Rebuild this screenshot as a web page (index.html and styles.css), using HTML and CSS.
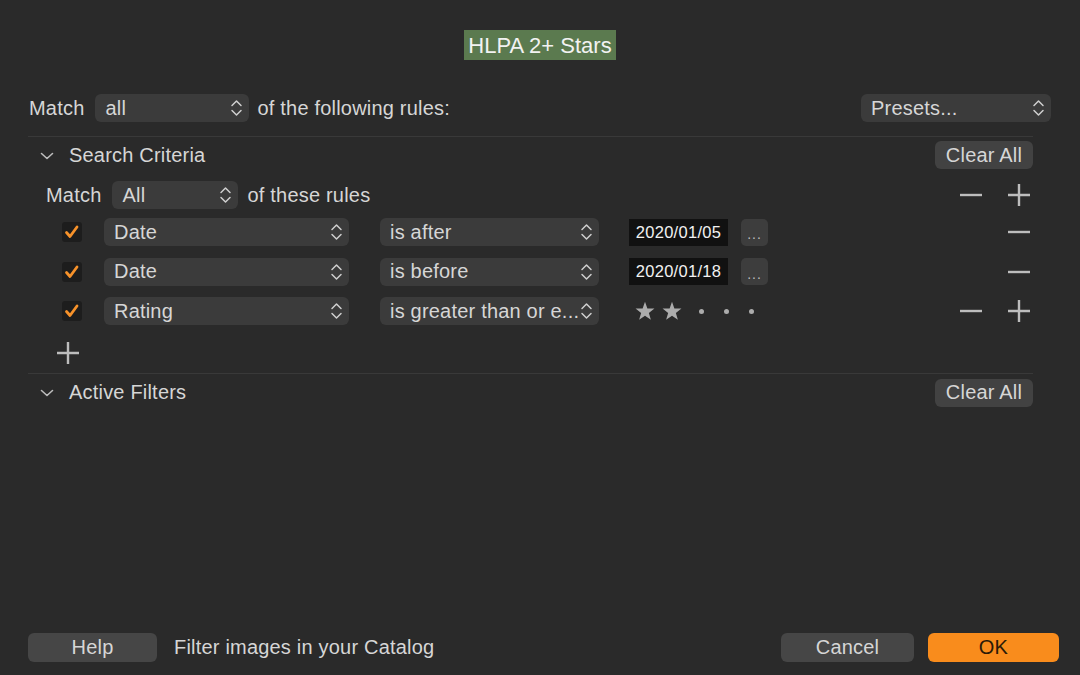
FILE: index.html
```html
<!DOCTYPE html>
<html>
<head>
<meta charset="utf-8">
<link rel="stylesheet" href="styles.css">
</head>
<body>
<div class="dialog">
  <div class="title-row"><span class="title">HLPA 2+ Stars</span></div>

  <div class="top-row">
    <span class="label">Match</span>
    <div class="popup w-match1"><span>all</span><svg class="updown" viewBox="0 0 13 22"><path d="M2 8.5 L6.5 4 L11 8.5 M2 13.5 L6.5 18 L11 13.5"/></svg></div>
    <span class="label">of the following rules:</span>
    <div class="popup w-presets"><span>Presets...</span><svg class="updown" viewBox="0 0 13 22"><path d="M2 8.5 L6.5 4 L11 8.5 M2 13.5 L6.5 18 L11 13.5"/></svg></div>
  </div>

  <div class="section">
    <div class="sep"></div>
    <div class="sec-head">
      <svg class="chev" viewBox="0 0 14 8"><path d="M1.5 1.5 L7 6.5 L12.5 1.5"/></svg>
      <span class="sec-title">Search Criteria</span>
      <button class="btn clear">Clear All</button>
    </div>

    <div class="match-row">
      <span class="label">Match</span>
      <div class="popup w-match2"><span>All</span><svg class="updown" viewBox="0 0 13 22"><path d="M2 8.5 L6.5 4 L11 8.5 M2 13.5 L6.5 18 L11 13.5"/></svg></div>
      <span class="label">of these rules</span>
      <div class="pm">
        <svg class="ic" viewBox="0 0 22 22"><path d="M0 11 H22"/></svg>
        <svg class="ic" viewBox="0 0 22 22"><path d="M0 11 H22 M11 0 V22"/></svg>
      </div>
    </div>

    <div class="rules">
      <div class="rule">
        <svg class="cb" viewBox="0 0 22 22"><rect x="1" y="1" width="20" height="20" rx="3"/><path d="M5.5 11.5 L9 15.5 L16 6"/></svg>
        <div class="popup w-field"><span>Date</span><svg class="updown" viewBox="0 0 13 22"><path d="M2 8.5 L6.5 4 L11 8.5 M2 13.5 L6.5 18 L11 13.5"/></svg></div>
        <div class="popup w-op"><span>is after</span><svg class="updown" viewBox="0 0 13 22"><path d="M2 8.5 L6.5 4 L11 8.5 M2 13.5 L6.5 18 L11 13.5"/></svg></div>
        <div class="datefield">2020/01/05</div>
        <div class="more">...</div>
        <div class="pm">
          <svg class="ic" viewBox="0 0 22 22"><path d="M0 11 H22"/></svg>
        </div>
      </div>
      <div class="rule">
        <svg class="cb" viewBox="0 0 22 22"><rect x="1" y="1" width="20" height="20" rx="3"/><path d="M5.5 11.5 L9 15.5 L16 6"/></svg>
        <div class="popup w-field"><span>Date</span><svg class="updown" viewBox="0 0 13 22"><path d="M2 8.5 L6.5 4 L11 8.5 M2 13.5 L6.5 18 L11 13.5"/></svg></div>
        <div class="popup w-op"><span>is before</span><svg class="updown" viewBox="0 0 13 22"><path d="M2 8.5 L6.5 4 L11 8.5 M2 13.5 L6.5 18 L11 13.5"/></svg></div>
        <div class="datefield">2020/01/18</div>
        <div class="more">...</div>
        <div class="pm">
          <svg class="ic" viewBox="0 0 22 22"><path d="M0 11 H22"/></svg>
        </div>
      </div>
      <div class="rule">
        <svg class="cb" viewBox="0 0 22 22"><rect x="1" y="1" width="20" height="20" rx="3"/><path d="M5.5 11.5 L9 15.5 L16 6"/></svg>
        <div class="popup w-field"><span>Rating</span><svg class="updown" viewBox="0 0 13 22"><path d="M2 8.5 L6.5 4 L11 8.5 M2 13.5 L6.5 18 L11 13.5"/></svg></div>
        <div class="popup w-op"><span>is greater than or e...</span><svg class="updown" viewBox="0 0 13 22"><path d="M2 8.5 L6.5 4 L11 8.5 M2 13.5 L6.5 18 L11 13.5"/></svg></div>
        <div class="stars">
          <svg class="star" viewBox="0 0 24 24"><path d="M12 2 L14.6 9.2 L22.3 9.4 L16.2 14.1 L18.4 21.5 L12 17.2 L5.6 21.5 L7.8 14.1 L1.7 9.4 L9.4 9.2 Z"/></svg>
          <svg class="star" viewBox="0 0 24 24"><path d="M12 2 L14.6 9.2 L22.3 9.4 L16.2 14.1 L18.4 21.5 L12 17.2 L5.6 21.5 L7.8 14.1 L1.7 9.4 L9.4 9.2 Z"/></svg>
          <span class="dot"></span><span class="dot"></span><span class="dot"></span>
        </div>
        <div class="pm">
          <svg class="ic" viewBox="0 0 22 22"><path d="M0 11 H22"/></svg>
          <svg class="ic" viewBox="0 0 22 22"><path d="M0 11 H22 M11 0 V22"/></svg>
        </div>
      </div>
      <div class="add-row">
        <svg class="ic" viewBox="0 0 22 22"><path d="M0 11 H22 M11 0 V22"/></svg>
      </div>
    </div>

    <div class="sep"></div>
    <div class="sec-head second">
      <svg class="chev" viewBox="0 0 14 8"><path d="M1.5 1.5 L7 6.5 L12.5 1.5"/></svg>
      <span class="sec-title">Active Filters</span>
      <button class="btn clear">Clear All</button>
    </div>
  </div>

  <div class="spacer"></div>

  <div class="bottom">
    <button class="btn help">Help</button>
    <span class="label hint">Filter images in your Catalog</span>
    <button class="btn cancel">Cancel</button>
    <button class="btn ok">OK</button>
  </div>
</div>
</body>
</html>
```

FILE: styles.css
```css
* { box-sizing: border-box; }
html, body {
  margin: 0;
  padding: 0;
  background: #2a2a2a;
}
body {
  font-family: "Liberation Sans", Arial, sans-serif;
  font-size: 20px;
  letter-spacing: 0.2px;
  color: #d6d6d6;
}
.dialog {
  width: 1080px;
  height: 675px;
  display: flex;
  flex-direction: column;
  background: #2a2a2a;
}
.title-row {
  padding-top: 30px;
  height: 60px;
  display: flex;
  justify-content: center;
}
.title {
  background: #5b7a4f;
  color: #f2f2f2;
  font-size: 22px;
  letter-spacing: 0;
  height: 30px;
  line-height: 31px;
  width: 152px;
  text-align: center;
  white-space: nowrap;
}
.top-row {
  margin-top: 34px;
  height: 28px;
  padding: 0 29px 0 29px;
  display: flex;
  align-items: center;
}
.label { white-space: nowrap; }
.top-row .w-match1 { margin: 0 8px 0 11px; }
.w-match1 { width: 154px; }
.w-presets { width: 190px; margin-left: auto; }
.popup {
  height: 28px;
  background: #3b3b3b;
  border-radius: 6px;
  display: flex;
  align-items: center;
  justify-content: space-between;
  padding: 0 6px 0 10px;
  color: #d6d6d6;
  white-space: nowrap;
  flex-shrink: 0;
}
.updown {
  width: 13px;
  height: 22px;
  flex-shrink: 0;
  fill: none;
  stroke: #cfcfcf;
  stroke-width: 1.5;
  stroke-linecap: round;
  stroke-linejoin: round;
}
.section {
  margin: 0 47px 0 28px;
  display: flex;
  flex-direction: column;
}
.sep {
  height: 1px;
  background: #393939;
}
.section > .sep:first-child { margin-top: 14px; }
.sec-head {
  margin-top: 4px;
  height: 28px;
  display: flex;
  align-items: center;
}
.sec-head.second { margin-top: 5px; }
.chev {
  width: 14px;
  height: 8px;
  margin-left: 12px;
  margin-top: 1px;
  fill: none;
  stroke: #bcbcbc;
  stroke-width: 1.6;
  stroke-linecap: round;
  stroke-linejoin: round;
}
.sec-title { margin-left: 15px; }
.btn {
  font-family: inherit;
  font-size: 20px;
  letter-spacing: 0.2px;
  color: #d6d6d6;
  border: none;
  border-radius: 6px;
  background: #424242;
  padding: 0;
}
.clear {
  margin-left: auto;
  width: 98px;
  height: 28px;
}
.match-row {
  margin-top: 12px;
  height: 28px;
  display: flex;
  align-items: center;
  padding-left: 18px;
}
.w-match2 { width: 126px; margin: 0 9px 0 11px; }
.pm {
  margin-left: auto;
  margin-right: 3px;
  display: flex;
  gap: 26px;
}
.ic {
  width: 22px;
  height: 22px;
  fill: none;
  stroke: #bdbdbd;
  stroke-width: 2.4;
  display: block;
}
.rules {
  margin-top: 9px;
  display: flex;
  flex-direction: column;
}
.rule {
  height: 28px;
  margin-bottom: 11.5px;
  display: flex;
  align-items: center;
  padding-left: 33px;
}
.cb {
  width: 22px;
  height: 22px;
  flex-shrink: 0;
}
.cb rect { fill: #1d1d1d; }
.cb path {
  fill: none;
  stroke: #f7922a;
  stroke-width: 2.8;
  stroke-linecap: round;
  stroke-linejoin: round;
}
.w-field { width: 245px; margin-left: 21px; }
.w-op { width: 219px; margin-left: 31px; }
.datefield {
  margin-left: 30px;
  width: 99px;
  height: 27px;
  background: #111111;
  color: #f2f2f2;
  font-size: 16.5px;
  letter-spacing: 0.3px;
  display: flex;
  align-items: center;
  justify-content: center;
}
.more {
  margin-left: 13px;
  width: 27px;
  height: 27px;
  border-radius: 5px;
  background: #3d3d3d;
  color: #bdbdbd;
  font-size: 14px;
  letter-spacing: 1px;
  display: flex;
  align-items: center;
  justify-content: center;
  padding-top: 4px;
}
.stars {
  margin-left: 35px;
  display: flex;
  align-items: center;
}
.star {
  width: 22px;
  height: 22px;
  fill: #acacac;
  margin-right: 5px;
}
.dot {
  width: 5px;
  height: 5px;
  border-radius: 50%;
  background: #acacac;
  margin-left: 20px;
}
.stars .dot:first-of-type { margin-left: 11px; }
.add-row {
  height: 28px;
  margin-top: 2px;
  display: flex;
  align-items: center;
  padding-left: 29px;
}
.rules + .sep { margin-top: 6px; }
.spacer { flex: 1; }
.bottom {
  height: 29px;
  margin-bottom: 13px;
  padding: 0 21px 0 28px;
  display: flex;
  align-items: center;
}
.bottom .btn { height: 29px; }
.help { width: 129px; background: #464646; }
.hint { margin-left: 17px; }
.cancel { margin-left: auto; width: 133px; background: #464646; }
.ok {
  margin-left: 14px;
  width: 131px;
  background: #f98c1c;
  color: #2a1a08;
}
```
